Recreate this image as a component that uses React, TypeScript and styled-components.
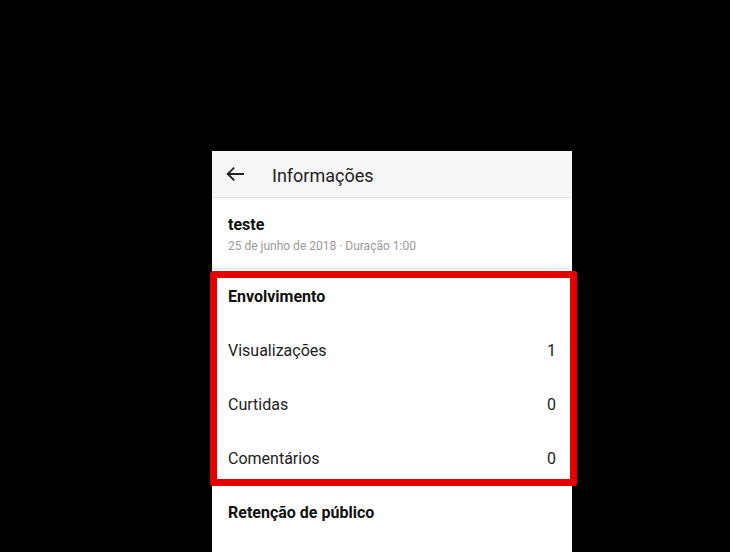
import React from "react";
import styled, { createGlobalStyle } from "styled-components";

const Global = createGlobalStyle`
  html, body { margin: 0; padding: 0; background: #000; }
  body { font-family: Roboto, "Noto Sans", Arial, sans-serif; -webkit-font-smoothing: antialiased; }
`;

const Page = styled.div`
  width: 730px;
  height: 552px;
  background: #000;
  padding: 151px 0 0 212px;
  box-sizing: border-box;
  overflow: hidden;
`;

const Panel = styled.div`
  width: 360px;
  height: 401px;
  background: #fff;
  display: flex;
  flex-direction: column;
`;

const Header = styled.div`
  height: 46px;
  flex: 0 0 auto;
  display: flex;
  align-items: center;
  background: #f6f6f6;
  border-bottom: 1px solid #e6e6e6;
  box-shadow: 0 1px 2px rgba(0, 0, 0, 0.06);
  position: relative;
  z-index: 1;
`;

const BackButton = styled.div`
  width: 60px;
  display: flex;
  align-items: center;
  padding-left: 14px;
  box-sizing: border-box;
  color: #222;
`;

const Title = styled.div`
  font-size: 18px;
  color: #222;
  margin-top: 2px;
`;

const Intro = styled.div`
  height: 71px;
  box-sizing: border-box;
  display: flex;
  flex-direction: column;
  padding: 17px 16px 0;
  border-bottom: 1px solid #e4e4e4;
  margin: 0 4px 0 0;
`;

const VideoName = styled.div`
  font-size: 16px;
  font-weight: 700;
  color: #111;
  line-height: 20px;
`;

const Meta = styled.div`
  font-size: 12px;
  color: #9a9a9a;
  line-height: 16px;
  margin-top: 3px;
`;

const Group = styled.div`
  position: relative;
`;

const Row = styled.div<{ $heading?: boolean }>`
  height: 54px;
  display: flex;
  align-items: center;
  justify-content: space-between;
  padding: 0 16px;
  font-size: 16px;
  font-weight: ${(p) => (p.$heading ? 700 : 400)};
  color: ${(p) => (p.$heading ? "#111" : "#222")};
`;

const Value = styled.span`
  font-size: 16px;
  color: #222;
`;

const Highlight = styled.div`
  position: absolute;
  top: 2px;
  left: -2px;
  right: -5px;
  bottom: -1px;
  border: 7px solid #e50000;
  border-radius: 3px;
  pointer-events: none;
`;

const BackArrow = () => (
  <svg width="18" height="14" viewBox="0 0 18 14" fill="none">
    <path d="M17.5 7H1.8M7.6 1.2L1.8 7l5.8 5.8" stroke="#222" strokeWidth="1.8" strokeLinecap="square" />
  </svg>
);

const metrics = [
  { label: "Visualizações", value: "1" },
  { label: "Curtidas", value: "0" },
  { label: "Comentários", value: "0" },
];

export default function App() {
  return (
    <>
      <Global />
      <Page>
        <Panel>
          <Header>
            <BackButton>
              <BackArrow />
            </BackButton>
            <Title>Informações</Title>
          </Header>
          <Intro>
            <VideoName>teste</VideoName>
            <Meta>25 de junho de 2018 · Duração 1:00</Meta>
          </Intro>
          <Group>
            <Row $heading>Envolvimento</Row>
            {metrics.map((m) => (
              <Row key={m.label}>
                <span>{m.label}</span>
                <Value>{m.value}</Value>
              </Row>
            ))}
            <Highlight />
          </Group>
          <Row $heading>Retenção de público</Row>
        </Panel>
      </Page>
    </>
  );
}
